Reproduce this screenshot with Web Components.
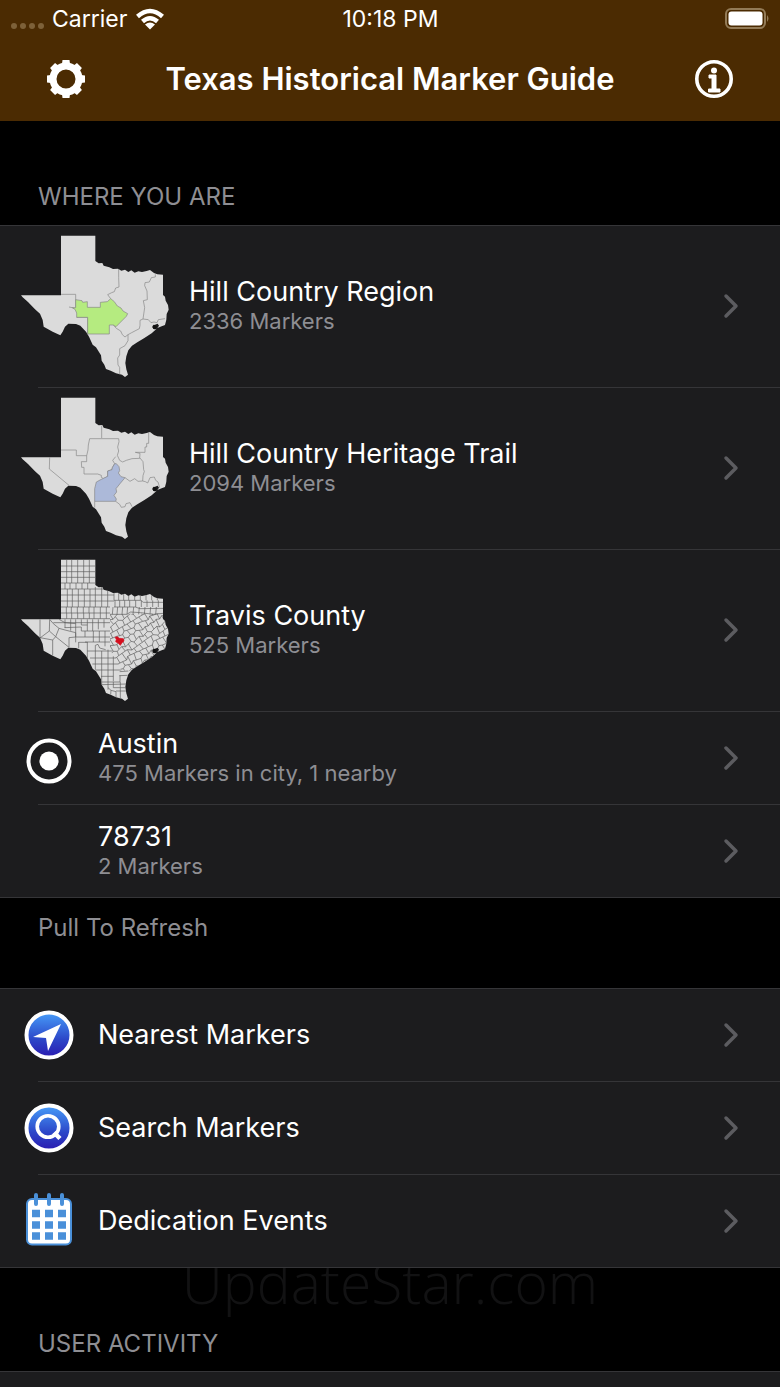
<!DOCTYPE html>
<html lang="en">
<head>
<meta charset="utf-8">
<meta name="viewport" content="width=device-width, initial-scale=1">
<title>Texas Historical Marker Guide</title>
<style>
    body {
        margin: 0;
        background: #000;
        color: #fff;
        font-family: Inter, "Liberation Sans", sans-serif;
    }
</style>
</head>
<body>
<marker-app></marker-app>

<script>
const html = String.raw

const TEXAS = "M153 30H256V106L266 113L277 112L281 120L298 125L309 130L324 129L334 135L345 132L355 139L364 134L374 141L385 137L396 139L410 136L420 133L432 142L442 146L459 147V208L465 213L467 225L474 238L476 252L470 265L469 282L465 298L455 302L442 307L447 300L443 294L433 298L427 306L434 311L440 309L425 323L402 338L382 350L366 360L355 374L349 392L346 412L349 431L354 447L345 454L336 447L318 443L302 435L288 430L283 417L275 405L273 389L258 365L248 357L237 333L228 318L211 300L198 295L175 294L165 303L158 318L151 329L128 318L101 303L98 283L90 264L75 251L54 229L38 215L33 209H153Z"

const REGION_LINES = html`
    <path d="M153 206H197V246M326 130V155L327 184L317 187L313 198L305 201L293 207L302 219M177 244L187 246L197 249M200 275H233V325
        M436 146V154L424 156L418 169L405 171L404 180L411 196L412 222L400 225L404 246L399 280L390 284V299L388 309L365 321L354 327L345 334L337 327L332 316L319 308L310 298
        M399 280L415 282L423 291L432 289L441 291L445 282L465 279M354 327V345L345 360L329 369V388L323 397L324 418L329 425V446"/>`
const REGION_AREA = "M197 222L216 225L218 230L232 228V245H271V230L292 228L302 219L313 228L322 241L333 247L339 256L353 264L349 272L318 303L310 298H298V325H233V275H200V262L195 251L187 246H197Z"

const TRAIL_LINES = html`
    <path d="M153 187H199V204H230V222H214L215 239H222V259H263L274 263V269L281 273L293 266V250L306 246L307 240L314 228L308 218L317 207
        M230 204L234 187L235 172L239 153H326L327 162L323 178L326 190L322 203L329 218L338 223L349 218L366 213L389 212L390 197L376 194H405V178H410V167H416V135
        M275 114V151M389 210L399 222L401 246L403 251L399 264L398 280L384 281L374 273L360 281L345 270
        M398 280L406 282L413 286L420 270L433 268L437 278L444 283L449 300M119 209L118 244L177 293M254 360V341
        M317 341L329 350L334 359L345 357L348 348L360 345L366 357"/>`
const TRAIL_AREA = "M319 228L327 237L329 249L325 256L333 267L345 270L330 288L318 303L320 313L312 323L319 334L317 341H254V303L259 283L274 275L293 266V250L306 246L307 240L314 228Z"

// Counties in the north and west are close to square
function squareCounties() {
    let d = ""
    for (const x of [170, 185, 203, 221, 238])
        d += `M${x} 30V100M${x + 2} 118V172M${x} 190V207M${x - 5} 100V118M${x - 1} 172V190`
    for (const y of [49, 66, 83, 100, 118, 136, 154, 172, 190, 207])
        d += `M153 ${y}H${y < 118 ? 256 : y < 172 ? 312 : 300}`
    for (const x of [256, 275, 293])
        d += `M${x} 112V172M${x - 4} 172V207`
    for (const x of [312, 326, 341, 356, 374, 391, 408, 425, 442])
        d += `M${x} 128V152M${x + 3} 152V172M${x - 3} 172L${x - 5} 194`
    d += "M312 152H392L400 158H459M312 172H376L390 177L459 176M300 194H350L362 187L392 189L430 194L459 191"

    d += "M90 209V265L118 244L119 209L130 222L147 236L165 241L197 249M90 264L128 271L137 261L147 236M118 244L137 261L177 293"
    d += "M128 271V318M147 209L165 219L197 222M165 209V235M182 209V243M177 293V264L197 262V249M130 219H300M164 234L214 232V244H300"
    d += "M197 209V278M214 209V226H232V244M232 209V226M248 209V244M265 209V239M282 209V234M197 262H225V244M225 262H300M225 277H300"
    d += "M250 244V277M268 244V277M285 244V290M206 277V296M232 277V325M206 278H232M256 287L264 284L269 295L287 300M256 287V360"
    d += "M232 304H308M240 325H318M247 343H326M256 361H334M275 304V405M294 300V420M310 320V395M273 380H310M273 397H330V377M275 405L350 403"
    d += "M329 366L355 364M328 378L353 377M310 397V414H349M294 414L303 422L302 435M303 422L318 426V443M318 424H349M331 397V445"
    return d
}

// Those in the east lean over: a brick pattern with its corners shifted
function leaningCounties() {
    const shift = (a, b) => ((a * 37 + b * 53 + a * b * 11) % 9 + 9) % 9 - 4
    const corner = (c, r) => {
        const u = c * 10 + shift(c, r) / 2
        const v = r * 18 + shift(r + 3, c)
        return [Math.round(300 + u * 0.86 + v * 0.5), Math.round(210 - u * 0.5 + v * 0.86)]
    }
    let d = ""
    for (let r = -2; r < 15; r++) {
        for (let c = -16; c < 24; c++) {
            d += `M${corner(c, r)}L${corner(c + 1, r)}`
            if ((c + r) % 2 == 0)
                d += `M${corner(c, r)}L${corner(c, r + 1)}`
        }
    }
    return d
}

class TexasMap extends HTMLElement {
    connectedCallback() {
        this.attachShadow({ mode: "open" })
        this.shadowRoot.innerHTML = this.render()
    }

    layers() {
        switch (this.getAttribute("kind")) {
            case "region":
                return html`${REGION_LINES}<path d="${REGION_AREA}" fill="#b5eb80"/>`
            case "trail":
                return html`${TRAIL_LINES}<path d="${TRAIL_AREA}" fill="#acb9d9"/>`
            default:
                return html`
                    <g clip-path="url(#state)" stroke="#5c5c5c">
                        <path d="${squareCounties()}"/>
                        <path clip-path="url(#east)" d="${leaningCounties()}"/>
                    </g>
                    <path d="M315 263L322 261L328 266L340 267L342 274L336 279L331 287L325 281L317 276L319 269Z" fill="#d50f1e" stroke="#d50f1e"/>`
        }
    }

    render() {
        return html`
            <style>
                :host { display: block; }
                svg { display: block; width: 150px; height: 144px; }
            </style>
            <svg viewBox="30 25 450 432" aria-hidden="true">
                <defs>
                    <clipPath id="state"><path d="${TEXAS}"/></clipPath>
                    <clipPath id="east"><path d="M300 194L459 191L480 208V310L360 365L334 361L318 325L300 304Z"/></clipPath>
                </defs>
                <path d="${TEXAS}" fill="#dbdbdb"/>
                <g fill="none" stroke="#858585" stroke-width="2" stroke-linejoin="round">${this.layers()}</g>
                <path d="M427 302L431 297L437 299L440 303L437 311L430 310Z" fill="#111"/>
            </svg>
        `
    }
}

const ICONS = {
    target: html`<circle cx="25" cy="28" r="20.5" fill="none" stroke="#fff" stroke-width="4"/><circle cx="25" cy="28" r="9.6" fill="#fff"/>`,
    nearest: html`
        <circle cx="25" cy="25" r="22.5" fill="url(#blue)" stroke="#fff" stroke-width="4"/>
        <path d="M37 14L24 41L22 28L9 27Z" fill="#fff"/>`,
    search: html`
        <circle cx="25" cy="25" r="22.5" fill="url(#blue)" stroke="#fff" stroke-width="4"/>
        <g fill="none" stroke="#fff"><circle cx="24" cy="23.5" r="10.8" stroke-width="3.6"/><path d="M30 29.500L36 35.500" stroke-width="4.500"/></g>`,
    calendar: html`
        <rect x="3" y="3" width="44" height="45.5" rx="5" fill="#fff" stroke="#4a90d9" stroke-width="2"/>
        <path d="M12 -1V8M25 -1V8M38 -1V8" stroke="#4a90d9" stroke-width="4" stroke-linecap="round"/>
        <path d="M8 17.500H16M21 17.500H29M34 17.500H42M8 29H16M21 29H29M34 29H42M8 40H16M21 40H29M34 40H42" stroke="#4a90d9" stroke-width="7.600"/>`,
}

class RowIcon extends HTMLElement {
    connectedCallback() {
        this.attachShadow({ mode: "open" })
        this.shadowRoot.innerHTML = html`
            <style>
                :host { display: block; }
                svg { display: block; width: 50px; height: 50px; overflow: visible; }
            </style>
            <svg viewBox="0 0 50 50" aria-hidden="true">
                <linearGradient id="blue" x2="0" y2="1">
                    <stop offset="0.05" stop-color="#4596f5"/>
                    <stop offset="0.6" stop-color="#2c46c8"/>
                    <stop offset="1" stop-color="#2a1ab0"/>
                </linearGradient>
                ${ICONS[this.getAttribute("name")] ?? ""}
            </svg>
        `
    }
}

class MarkerRow extends HTMLElement {
    connectedCallback() {
        this.attachShadow({ mode: "open" })
        this.shadowRoot.innerHTML = this.render()
    }

    render() {
        return html`
            <style>
                :host {
                    display: block;
                    --row-height: 93px;
                    --row-start: 24px;
                    --row-gap: 24px;
                    --line-start: 38px;
                }
                :host([large]) {
                    --row-height: 162px;
                    --row-start: 20px;
                    --row-gap: 19px;
                }
                :host(:last-of-type) { --line-start: 0; }
                a {
                    display: flex;
                    align-items: center;
                    gap: var(--row-gap);
                    box-sizing: border-box;
                    min-height: var(--row-height);
                    padding: 0 40px 2px var(--row-start);
                    color: inherit;
                    text-decoration: none;
                    background: linear-gradient(#353538, #353538) var(--line-start) 100% / 100% 1px no-repeat;
                }
                .texts { flex: 1; }
                .title { font-size: 27px; line-height: 32px; }
                ::slotted([slot="detail"]) {
                    display: block;
                    margin-bottom: 2px;
                    color: #8e8e93;
                    font-size: 22px;
                    line-height: 26px;
                }
                .chevron { width: 18px; height: 26px; }
            </style>
            <a href="#">
                <slot name="icon"></slot>
                <div class="texts">
                    <div class="title"><slot></slot></div>
                    <slot name="detail"></slot>
                </div>
                <svg class="chevron" viewBox="0 0 18 26" aria-hidden="true">
                    <path d="M4 3L14 13L4 23" fill="none" stroke="#5c5c60" stroke-width="3.500" stroke-linecap="round" stroke-linejoin="round"/>
                </svg>
            </a>
        `
    }
}

class MarkerGroup extends HTMLElement {
    connectedCallback() {
        this.attachShadow({ mode: "open" })
        this.shadowRoot.innerHTML = html`
            <style>
                :host {
                    display: block;
                    position: relative;
                    z-index: 1;
                    border-top: 1px solid #353538;
                    background: #1c1c1e;
                }
                :host([fill]) { flex: 1; min-height: 14px; }
            </style>
            <slot></slot>
        `
    }
}

class NavHeader extends HTMLElement {
    connectedCallback() {
        this.attachShadow({ mode: "open" })
        this.shadowRoot.innerHTML = this.render()
    }

    render() {
        return html`
            <style>
                :host { display: block; background: #4b2b02; }
                .status {
                    display: grid;
                    grid-template-columns: 1fr auto 1fr;
                    align-items: center;
                    height: 37px;
                    padding: 0 10px 0 11px;
                    font-size: 23px;
                    line-height: 28px;
                }
                .carrier { display: flex; align-items: center; gap: 8px; }
                .battery { justify-self: end; }
                .bar {
                    display: flex;
                    align-items: center;
                    justify-content: space-between;
                    height: 84px;
                    padding: 0 46px;
                }
                h1 { margin: 0; font-size: 31px; line-height: 38px; font-weight: 600; }
                button {
                    display: block;
                    padding: 0;
                    border: 0;
                    background: none;
                    color: inherit;
                }
                svg { display: block; }
            </style>
            <div class="status">
                <div class="carrier">
                    <svg width="33" height="22" viewBox="0 0 33 22" fill="#7d6139" aria-hidden="true">
                        <circle cx="3" cy="18" r="3"/><circle cx="12" cy="18" r="3"/><circle cx="21" cy="18" r="3"/><circle cx="30" cy="18" r="3"/>
                    </svg>
                    <span>Carrier</span>
                    <svg width="30" height="22" viewBox="0 0 30 22" fill="none" stroke="#fff" stroke-width="4.5" aria-hidden="true">
                        <path d="M2.500 8.500Q15-2.500 27.500 8.500M7.500 13.500Q15 7 22.500 13.500"/>
                        <path d="M15 21.500L10 16.500Q15 12.500 20 16.500Z" fill="#fff" stroke="none"/>
                    </svg>
                </div>
                <span>10:18 PM</span>
                <svg class="battery" width="46" height="22" viewBox="0 0 46 22" aria-hidden="true">
                    <rect x="2" y="1" width="39" height="19" rx="5" fill="none" stroke="#937b57" stroke-width="2"/>
                    <rect x="4.500" y="3.500" width="34" height="14" rx="3" fill="#fff"/>
                    <path d="M43 7Q46 10.500 43 14Z" fill="#937b57"/>
                </svg>
            </div>
            <div class="bar">
                <button type="button" aria-label="Settings">
                    <svg width="40" height="40" viewBox="0 0 40 40">
                        <circle cx="20" cy="20" r="13" fill="none" stroke="#fff" stroke-width="7"/>
                        <path d="M16 5L16.500 1H23.500L24 5ZM16 35L16.500 39H23.500L24 35ZM5 16L1 16.500V23.500L5 24ZM35 16L39 16.500V23.500L35 24Z" fill="#fff"/>
                        <path d="M16 5L16.500 1H23.500L24 5ZM16 35L16.500 39H23.500L24 35ZM5 16L1 16.500V23.500L5 24ZM35 16L39 16.500V23.500L35 24Z" fill="#fff" transform="rotate(45 20 20)"/>
                    </svg>
                </button>
                <h1>Texas Historical Marker Guide</h1>
                <button type="button" aria-label="Information">
                    <svg width="40" height="40" viewBox="0 0 40 40" fill="#fff">
                        <circle cx="20" cy="20" r="17.2" fill="none" stroke="#fff" stroke-width="3.6"/>
                        <circle cx="20" cy="11.5" r="3"/>
                        <path d="M15 16H22V30H26V33H14.500V30H18V19H15Z" stroke="#fff" stroke-linejoin="round"/>
                    </svg>
                </button>
            </div>
        `
    }
}

class MarkerApp extends HTMLElement {
    connectedCallback() {
        this.attachShadow({ mode: "open" })
        this.shadowRoot.innerHTML = this.render()
    }

    render() {
        return html`
            <style>
                :host {
                    display: flex;
                    flex-direction: column;
                    min-height: 100vh;
                }
                h2, .note {
                    margin: 0;
                    color: #8e8e93;
                    font-size: 24px;
                    line-height: 28px;
                    font-weight: 400;
                }
                h2 { padding: 62px 38px 14px; }
                .note { padding: 16px 38px 46px; }
                .last { position: relative; }
                .last h2 { padding-bottom: 13px; }
                /* sits behind the groups, which cover its top */
                .mark {
                    position: absolute;
                    inset: -22px 0 auto;
                    color: #121213;
                    font: 300 57px/72px "Open Sans", sans-serif;
                    text-align: center;
                }
            </style>
            <nav-header></nav-header>
            <h2>WHERE YOU ARE</h2>
            <marker-group>
                <marker-row large><texas-map slot="icon" kind="region"></texas-map>Hill Country Region<span slot="detail">2336 Markers</span></marker-row>
                <marker-row large><texas-map slot="icon" kind="trail"></texas-map>Hill Country Heritage Trail<span slot="detail">2094 Markers</span></marker-row>
                <marker-row large><texas-map slot="icon" kind="county"></texas-map>Travis County<span slot="detail">525 Markers</span></marker-row>
                <marker-row><row-icon slot="icon" name="target"></row-icon>Austin<span slot="detail">475 Markers in city, 1 nearby</span></marker-row>
                <marker-row><row-icon slot="icon"></row-icon>78731<span slot="detail">2 Markers</span></marker-row>
            </marker-group>
            <p class="note">Pull To Refresh</p>
            <marker-group>
                <marker-row><row-icon slot="icon" name="nearest"></row-icon>Nearest Markers</marker-row>
                <marker-row><row-icon slot="icon" name="search"></row-icon>Search Markers</marker-row>
                <marker-row><row-icon slot="icon" name="calendar"></row-icon>Dedication Events</marker-row>
            </marker-group>
            <div class="last">
                <div class="mark">UpdateStar.com</div>
                <h2>USER ACTIVITY</h2>
            </div>
            <marker-group fill></marker-group>
        `
    }
}

customElements.define("texas-map", TexasMap)
customElements.define("row-icon", RowIcon)
customElements.define("marker-row", MarkerRow)
customElements.define("marker-group", MarkerGroup)
customElements.define("nav-header", NavHeader)
customElements.define("marker-app", MarkerApp)
</script>
</body>
</html>
